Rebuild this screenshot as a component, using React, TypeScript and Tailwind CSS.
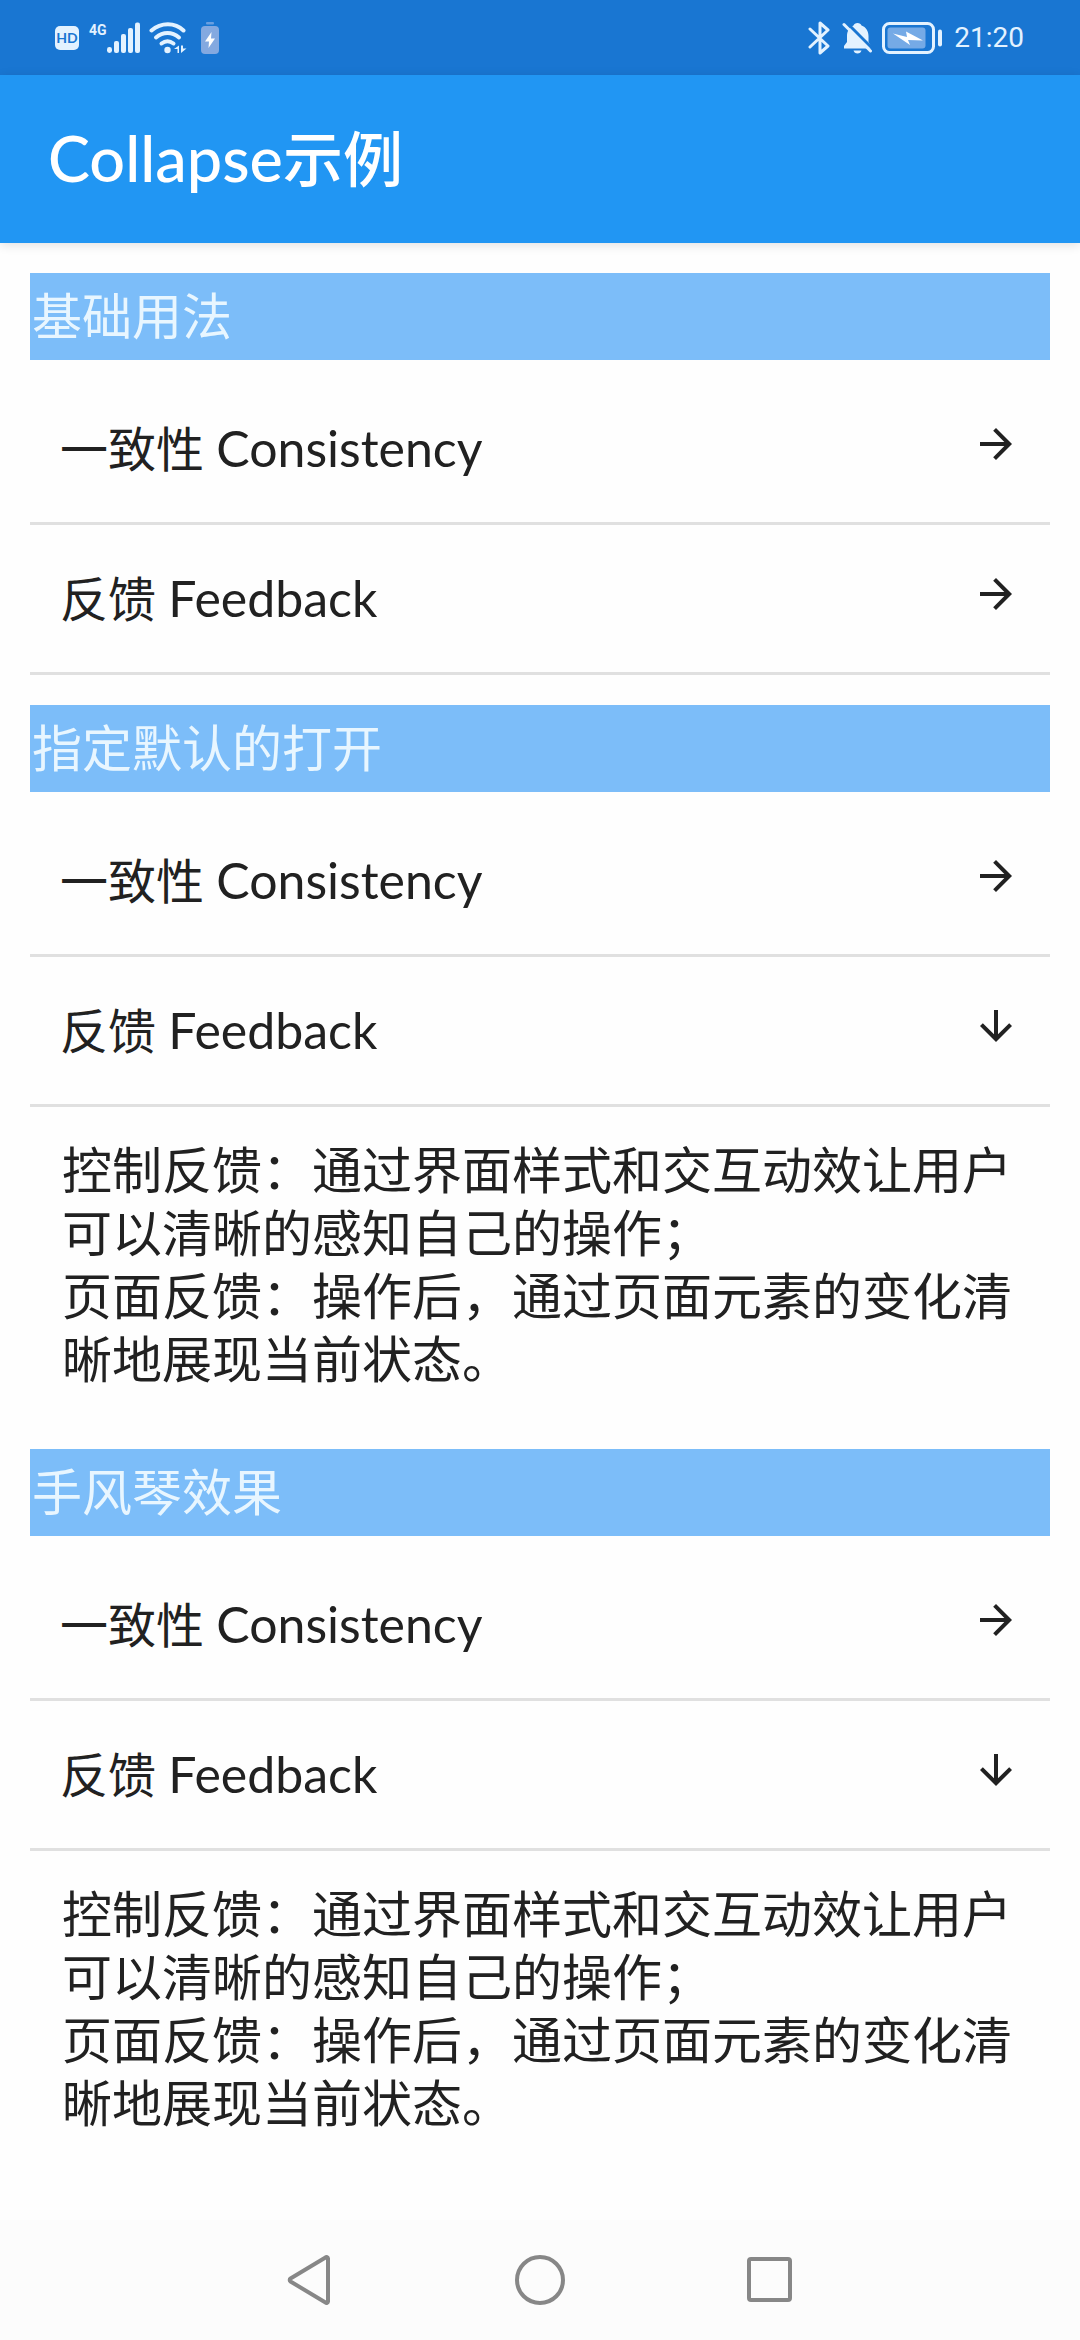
import { useState } from "react";

const feedbackText = [
  "控制反馈：通过界面样式和交互动效让用户可以清晰的感知自己的操作；",
  "页面反馈：操作后，通过页面元素的变化清晰地展现当前状态。",
];

const consistencyText = [
  "与现实生活一致：与现实生活的流程、逻辑保持一致；",
  "在界面中一致：所有的元素和结构需保持一致。",
];

type Section = { id: string; title: string; open: string[]; accordion?: boolean };

const sections: Section[] = [
  { id: "basic", title: "基础用法", open: [] },
  { id: "default", title: "指定默认的打开", open: ["feedback"] },
  { id: "accordion", title: "手风琴效果", open: ["feedback"], accordion: true },
];

const items = [
  { id: "consistency", label: "一致性", english: "Consistency", body: consistencyText },
  { id: "feedback", label: "反馈", english: "Feedback", body: feedbackText },
];

function ArrowIcon({ open }: { open: boolean }) {
  return (
    <svg viewBox="0 0 24 24" className="size-12" fill="currentColor" aria-hidden="true">
      {open ? (
        <path d="M20 12l-1.41-1.41L13 16.17V4h-2v12.17l-5.58-5.59L4 12l8 8z" />
      ) : (
        <path d="M12 4l-1.41 1.41L16.17 11H4v2h12.17l-5.58 5.59L12 20l8-8z" />
      )}
    </svg>
  );
}

function StatusBar() {
  return (
    <div className="flex h-[75px] items-center justify-between bg-[#1976d2] pr-14 pl-[55px] text-[#e3f2ff]">
      <div className="flex items-center">
        <span className="flex size-6 items-center justify-center rounded-[5px] bg-[#e3f2ff] text-[14px] leading-6 font-bold text-[#1976d2]">
          HD
        </span>
        <span className="ml-2.5 self-start font-['Roboto',sans-serif] text-[14px] leading-4 font-bold">4G</span>
        <svg width="34" height="32" viewBox="0 0 34 32" fill="currentColor" aria-hidden="true">
          <rect x="0" y="25" width="5" height="6" rx="2.4" />
          <rect x="7" y="19" width="5" height="12" rx="2" />
          <rect x="14" y="12" width="5" height="19" rx="2" />
          <rect x="21" y="6" width="5" height="25" rx="2" />
          <rect x="28" y="0.500" width="5" height="30.500" rx="2" />
        </svg>
        <svg className="ml-2" width="40" height="32" viewBox="0 0 40 32" fill="none" aria-hidden="true">
          <g stroke="currentColor" strokeWidth="4" strokeLinecap="round">
            <path d="M2.500 8.500C12 .2 26 .2 34.500 8.500" />
            <path d="M7 15.500c7-6 16-6 23 0" />
            <path d="M12.500 21.500c4-3 8-3 12 0" />
          </g>
          <circle cx="18.500" cy="28" r="3.200" fill="currentColor" />
          <path d="M30 23.500v7.500h-1.500V27H25zM32 23.500v7.500l5.500-4.500h-3.500v-3z" fill="currentColor" />
        </svg>
        <svg className="ml-3" width="18" height="32" viewBox="0 0 18 32" aria-hidden="true">
          <rect x="5" y="0" width="8" height="2.500" rx="1" fill="#6a9fe0" />
          <rect x="0" y="4" width="18" height="28" rx="4" fill="#84a9e0" />
          <path d="M10.500 10 4 19.500h4L7.500 26 14 16.500h-4z" fill="#fff" />
        </svg>
      </div>
      <div className="flex items-center">
        <svg width="22" height="34" viewBox="0 0 22 34" fill="none" stroke="currentColor" strokeWidth="3" strokeLinecap="round" strokeLinejoin="round" aria-hidden="true">
          <path d="M2 8 20 25l-8 7V2l8 7L2 26" />
        </svg>
        <svg className="ml-3" width="32" height="34" viewBox="0 0 32 34" aria-hidden="true">
          <path
            d="M15.500 2c2 0 3.500 1 4 2.500 4.500 1.500 7 5.500 7 10.500v6l3 5v1.500H2V25l3-4v-6c0-5 2.500-9 6.500-10.500C12 3 13.500 2 15.500 2z"
            fill="currentColor"
          />
          <path d="M11.500 29.500h8c-.5 2-2 3-4 3s-3.500-1-4-3z" fill="currentColor" />
          <path d="M4.500 1.500 31 28" stroke="#1976d2" strokeWidth="3" />
          <path d="M2 3.500 28.500 30" stroke="currentColor" strokeWidth="3" strokeLinecap="round" />
        </svg>
        <svg className="ml-2" width="60" height="32" viewBox="0 0 60 32" aria-hidden="true">
          <rect x="1.500" y="1.500" width="50" height="29" rx="6" fill="none" stroke="currentColor" strokeWidth="3" />
          <rect x="5.500" y="5.500" width="38" height="21" rx="3" fill="#75aae6" />
          <path d="M11 11.500 25 15l-1-5.500 17 9-15-.5 2 5z" fill="#fff" />
          <rect x="56" y="7.500" width="4" height="17" rx="2" fill="currentColor" />
        </svg>
        <time className="ml-3 font-['Roboto',sans-serif] text-[28px] leading-10">21:20</time>
      </div>
    </div>
  );
}

function CollapseSection({ section }: { section: Section }) {
  const [open, setOpen] = useState<string[]>(section.open);

  const toggle = (id: string) => {
    setOpen((current) => {
      if (current.includes(id)) return current.filter((other) => other !== id);
      return section.accordion ? [id] : [...current, id];
    });
  };

  return (
    <section>
      <h2 className="mb-[15px] bg-[#7cbdf9] py-3 pl-0.5 text-[50px] leading-[63px] text-[#e8f6ff]">{section.title}</h2>
      {items.map((item) => {
        const isOpen = open.includes(item.id);
        const panelId = `${section.id}-${item.id}`;
        return (
          <div key={item.id}>
            <button
              type="button"
              aria-expanded={isOpen}
              aria-controls={panelId}
              onClick={() => toggle(item.id)}
              className="flex w-full items-start justify-between border-b-3 border-[#e0e0e0] px-[30px] py-[42px] text-left text-[48px] leading-[63px]"
            >
              <span>
                {item.label} <span className="text-[50px] leading-none">{item.english}</span>
              </span>
              <span className="flex h-[54px] items-center">
                <ArrowIcon open={isOpen} />
              </span>
            </button>
            {isOpen && (
              <div id={panelId} className="px-8 pt-8 pb-7 text-[50px] leading-[63px]">
                {item.body.map((line) => (
                  <p key={line}>{line}</p>
                ))}
              </div>
            )}
          </div>
        );
      })}
    </section>
  );
}

function NavigationBar() {
  return (
    <nav className="flex h-[120px] items-center justify-center gap-[180px] bg-[#fcfcfc] text-[#878787]">
      <button type="button" aria-label="返回">
        <svg width="50" height="50" viewBox="0 0 50 50" fill="none" stroke="currentColor" strokeWidth="4" strokeLinejoin="round" aria-hidden="true">
          <path d="M43 3.500v43a1.500 1.500 0 0 1-2.500 1L5.500 26.500a1.800 1.800 0 0 1 0-3l35-21a1.500 1.500 0 0 1 2.500 1z" />
        </svg>
      </button>
      <button type="button" aria-label="主屏幕">
        <svg width="50" height="50" viewBox="0 0 50 50" fill="none" stroke="currentColor" strokeWidth="4" aria-hidden="true">
          <circle cx="25" cy="25" r="23" />
        </svg>
      </button>
      <button type="button" aria-label="最近任务">
        <svg width="50" height="50" viewBox="0 0 50 50" fill="none" stroke="currentColor" strokeWidth="4" aria-hidden="true">
          <rect x="4" y="4" width="41" height="41" rx="2" />
        </svg>
      </button>
    </nav>
  );
}

export default function App() {
  return (
    <div className="flex min-h-screen flex-col bg-[#fefefe] font-['Lato','Noto_Sans_CJK_SC',sans-serif] text-[#212121]">
      <StatusBar />
      <header className="flex h-[168px] items-center bg-[#2196f3] px-12 text-white shadow-[0_2px_10px_rgba(0,0,0,0.12)]">
        <h1 className="font-['Lato_Medium','Lato','Noto_Sans_CJK_SC',sans-serif] text-[60px] leading-[72px] font-medium">
          <span className="text-[63px] leading-none">Collapse</span>示例
        </h1>
      </header>
      <main className="flex flex-1 flex-col gap-[30px] px-[30px] pt-[30px]">
        {sections.map((section) => (
          <CollapseSection key={section.id} section={section} />
        ))}
      </main>
      <NavigationBar />
    </div>
  );
}
